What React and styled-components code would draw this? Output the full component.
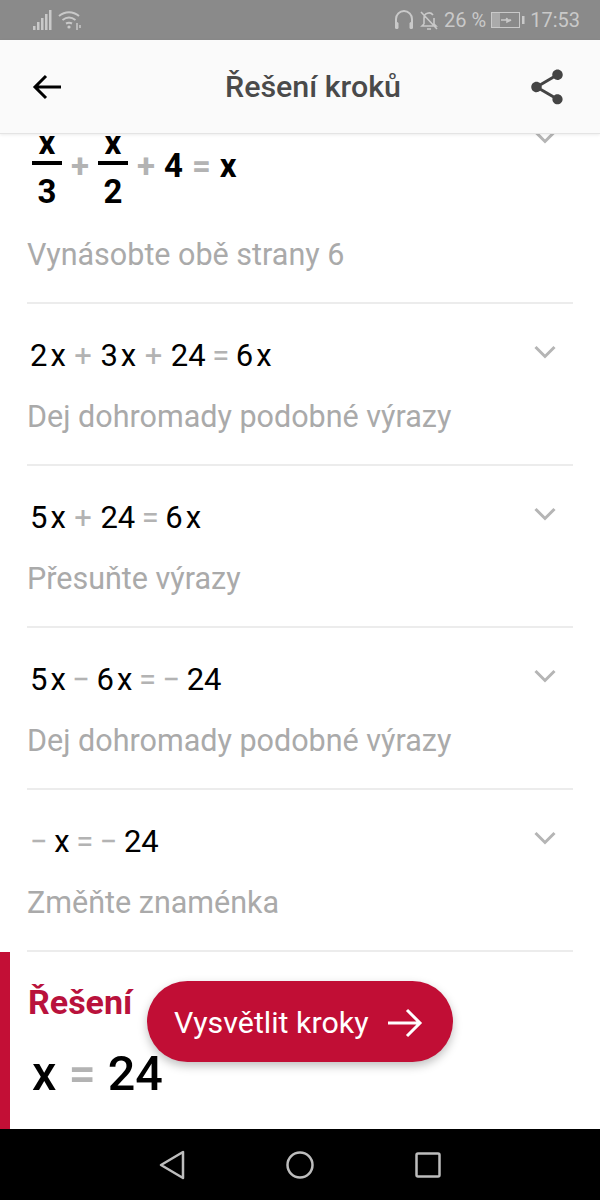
import React from 'react'
import styled, { createGlobalStyle } from 'styled-components'
import { MdShare } from 'react-icons/md'

const steps = [
  { eq: ['2', 'x', '+', '3', 'x', '+', '24', '=', '6', 'x'], hint: 'Dej dohromady podobné výrazy' },
  { eq: ['5', 'x', '+', '24', '=', '6', 'x'], hint: 'Přesuňte výrazy' },
  { eq: ['5', 'x', '−', '6', 'x', '=', '−', '24'], hint: 'Dej dohromady podobné výrazy' },
  { eq: ['−', 'x', '=', '−', '24'], hint: 'Změňte znaménka' },
]

const isOperator = (t) => ['+', '−', '='].includes(t)

function Equation({ tokens }) {
  return (
    <EquationLine>
      {tokens.map((t, i) =>
        isOperator(t)
          ? <Operator key={i} $gap={t === '+' ? 8.5 : 6.5}>{t}</Operator>
          : <Term key={i} $var={t === 'x' && !isOperator(tokens[i - 1] || '+')}>{t}</Term>
      )}
    </EquationLine>
  )
}

function Chevron() {
  return (
    <ChevronIcon viewBox="0 0 22 14" fill="none" stroke="currentColor" strokeWidth="3">
      <path d="M1.500 2L11 11.500 20.500 2" />
    </ChevronIcon>
  )
}

function App() {
  return (
    <Page>
      <GlobalStyle />

      <StatusBar>
        <StatusGroup>
          <svg width="20" height="22" viewBox="0 0 20 22" fill="currentColor">
            <rect x="0" y="17" width="2.500" height="4" />
            <rect x="4" y="13" width="2.500" height="8" />
            <rect x="8" y="9" width="2.500" height="12" />
            <rect x="12" y="5" width="2.500" height="16" />
            <rect x="16" y="1" width="2.500" height="20" />
          </svg>
          <svg width="24" height="20" viewBox="0 0 24 20" fill="none" stroke="currentColor" strokeWidth="2">
            <path d="M1 6c6-5 14-5 20 0M4.500 10c4-3 9-3 13 0M8 13.500c2-1 4-1 6 0" />
            <circle cx="11" cy="17" r="1.600" fill="currentColor" stroke="none" />
            <path d="M19 13v7M22 15v3" strokeWidth="1.500" />
          </svg>
        </StatusGroup>
        <StatusGroup>
          <svg width="20" height="22" viewBox="0 0 20 22" fill="none" stroke="currentColor" strokeWidth="2">
            <path d="M2 18V10a8 8 0 0 1 16 0v8" />
            <rect x="1" y="13" width="3.500" height="7" rx="1.500" fill="currentColor" stroke="none" />
            <rect x="15.500" y="13" width="3.500" height="7" rx="1.500" fill="currentColor" stroke="none" />
          </svg>
          <svg width="20" height="22" viewBox="0 0 20 22" fill="none" stroke="currentColor" strokeWidth="1.600">
            <path d="M5 15V9a5 5 0 0 1 9-3M15 9v6l2 2H3l2-2M8 20h4M2 3l16 17" />
          </svg>
          <StatusText>26 %</StatusText>
          <svg width="34" height="18" viewBox="0 0 34 18" fill="none">
            <rect x="0.500" y="1.500" width="28" height="15" stroke="currentColor" strokeWidth="1" />
            <rect x="1" y="2" width="8" height="14" fill="currentColor" opacity="0.5" />
            <path d="M10 9h5l1-2v2h4l-4 2v-2" stroke="currentColor" strokeWidth="1.500" />
            <rect x="31" y="5" width="2.500" height="8" fill="currentColor" />
          </svg>
          <StatusText>17:53</StatusText>
        </StatusGroup>
      </StatusBar>

      <Header>
        <svg width="30" height="26" viewBox="0 0 30 26" fill="none" stroke="#000" strokeWidth="3">
          <path d="M29 13H3M14 2L3 13l11 11" />
        </svg>
        <Title>Řešení kroků</Title>
        <MdShare size={42} color="#444" />
      </Header>

      <Content>
        <FirstRow>
          <RowTop>
            <FractionLine>
              <Fraction><span>x</span><Bar /><span>3</span></Fraction>
              <BoldOperator>+</BoldOperator>
              <Fraction><span>x</span><Bar /><span>2</span></Fraction>
              <BoldOperator>+</BoldOperator>
              <span>4</span>
              <BoldOperator>=</BoldOperator>
              <span>x</span>
            </FractionLine>
            <FirstChevron><Chevron /></FirstChevron>
          </RowTop>
          <FirstHint>Vynásobte obě strany 6</FirstHint>
        </FirstRow>

        {steps.map((s, i) => (
          <StepRow key={i}>
            <RowTop>
              <Equation tokens={s.eq} />
              <Chevron />
            </RowTop>
            <Hint>{s.hint}</Hint>
          </StepRow>
        ))}

        <Solution>
          <SolutionLabel>Řešení</SolutionLabel>
          <SolutionValue>x<SolutionEquals>=</SolutionEquals>24</SolutionValue>
        </Solution>

        <ExplainButton>
          Vysvětlit kroky
          <svg width="36" height="30" viewBox="0 0 36 30" fill="none" stroke="#fff" strokeWidth="3">
            <path d="M1 15h32M20 2l13 13-13 13" />
          </svg>
        </ExplainButton>
      </Content>

      <NavBar>
        <svg width="26" height="30" viewBox="0 0 26 30" fill="none" stroke="#bdbdbd" strokeWidth="2.500" strokeLinejoin="round">
          <path d="M24 2v26L2 15z" />
        </svg>
        <svg width="30" height="30" viewBox="0 0 30 30" fill="none" stroke="#bdbdbd" strokeWidth="2.500">
          <circle cx="15" cy="15" r="12.500" />
        </svg>
        <svg width="26" height="26" viewBox="0 0 26 26" fill="none" stroke="#bdbdbd" strokeWidth="2.500">
          <rect x="1.500" y="1.500" width="23" height="23" rx="1.500" />
        </svg>
      </NavBar>
    </Page>
  )
}

const GlobalStyle = createGlobalStyle`
  html, body {
    margin: 0;
    padding: 0;
    background: #fff;
  }
`

const Page = styled.div`
  width: 600px;
  height: 1200px;
  display: flex;
  flex-direction: column;
  overflow: hidden;
  font-family: Roboto, "Liberation Sans", sans-serif;
`

const StatusBar = styled.div`
  height: 40px;
  flex: none;
  background: #8a8a8a;
  color: #c9c9c9;
  display: flex;
  align-items: center;
  justify-content: space-between;
  padding: 0 20px 0 33px;
`

const StatusGroup = styled.div`
  display: flex;
  align-items: center;
  gap: 5px;
`

const StatusText = styled.span`
  font-size: 20px;
`

const Header = styled.div`
  height: 94px;
  flex: none;
  box-sizing: border-box;
  background: #fafafa;
  border-bottom: 1px solid #e4e4e4;
  box-shadow: 0 1px 3px rgba(0, 0, 0, 0.08);
  display: flex;
  align-items: center;
  justify-content: space-between;
  padding: 0 32px 0 32px;
  position: relative;
  z-index: 2;
`

const Title = styled.div`
  font-size: 30.4px;
  font-weight: 500;
  color: #4a4a4a;
  margin-left: 38px;
`

const Content = styled.div`
  flex: 1;
  position: relative;
  overflow: hidden;
`

const FirstRow = styled.div`
  height: 170px;
  box-sizing: border-box;
  margin: 0 27px;
  border-bottom: 2px solid #ececec;
  overflow: hidden;
`

const StepRow = styled.div`
  height: 162px;
  box-sizing: border-box;
  margin: 0 27px;
  padding-top: 33px;
  border-bottom: 2px solid #ececec;
`

const RowTop = styled.div`
  display: flex;
  justify-content: space-between;
  align-items: flex-start;
  padding-right: 17px;
`

const EquationLine = styled.div`
  display: flex;
  align-items: center;
  height: 36px;
  padding-left: 3px;
  font-size: 31px;
  color: #000;
`

const Term = styled.span`
  margin-left: ${(p) => (p.$var ? '3px' : '0')};
`

const Operator = styled.span`
  color: #b3b3b3;
  margin: 0 ${(p) => p.$gap}px;

  &:first-child,
  & + & {
    margin-left: 0;
  }
`

const ChevronIcon = styled.svg`
  width: 22px;
  height: 14px;
  margin-top: 8px;
  color: #b5b5b5;
`

const FirstChevron = styled.div`
  margin-top: -12px;
`

const FractionLine = styled.div`
  display: flex;
  align-items: center;
  height: 78px;
  margin-top: -8px;
  padding-left: 5px;
  font-size: 33px;
  font-weight: 700;
  color: #000;
`

const Fraction = styled.div`
  width: 30px;
  display: flex;
  flex-direction: column;
  align-items: center;
  line-height: 32px;
  margin-bottom: -4px;
`

const Bar = styled.div`
  width: 30px;
  height: 4px;
  background: #000;
  margin: 2px 0 11px;
  flex: none;
`

const BoldOperator = styled.span`
  color: #b3b3b3;
  margin: 0 9px;
`

const Hint = styled.div`
  margin-top: 27px;
  font-size: 30.5px;
  line-height: 34px;
  color: #aaaaaa;
`

const FirstHint = styled(Hint)`
  margin-top: 34px;
`

const Solution = styled.div`
  border-left: 10px solid #c30f36;
  height: 178px;
  box-sizing: border-box;
  padding: 32px 0 0 18px;
`

const SolutionLabel = styled.div`
  font-size: 34px;
  font-weight: 700;
  line-height: 36px;
  color: #b9123c;
`

const SolutionValue = styled.div`
  margin-top: 25px;
  padding-left: 4px;
  font-size: 48.500px;
  line-height: 58px;
  font-weight: 500;
  color: #000;
`

const SolutionEquals = styled.span`
  color: #b3b3b3;
  margin: 0 12px;
`

const ExplainButton = styled.div`
  position: absolute;
  left: 147px;
  top: 847px;
  width: 306px;
  height: 81px;
  box-sizing: border-box;
  border-radius: 41px;
  background: #c10e35;
  color: #fff;
  font-size: 30.400px;
  display: flex;
  align-items: center;
  gap: 18px;
  padding: 2px 0 0 27px;
  box-shadow: 0 4px 10px rgba(0, 0, 0, 0.25);
`

const NavBar = styled.div`
  height: 71px;
  flex: none;
  background: #000;
  display: flex;
  align-items: center;
  justify-content: center;
  gap: 100px;
`

export default App
